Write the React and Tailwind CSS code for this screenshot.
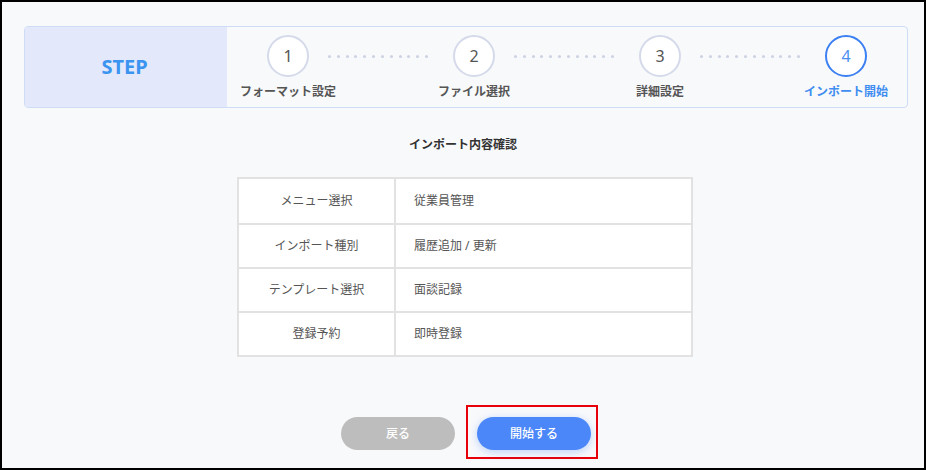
import React from "react";

const steps = [
  { no: 1, label: "フォーマット設定" },
  { no: 2, label: "ファイル選択" },
  { no: 3, label: "詳細設定" },
  { no: 4, label: "インポート開始", active: true },
];

const rows = [
  ["メニュー選択", "従業員管理"],
  ["インポート種別", "履歴追加 / 更新"],
  ["テンプレート選択", "面談記録"],
  ["登録予約", "即時登録"],
];

function Dots() {
  return (
    <div className="w-[144px] h-[42px] flex items-center pl-[19px] pr-[25px]">
      <div className="flex-1 flex justify-between">
        {Array.from({ length: 12 }).map((_, i) => (
          <span key={i} className="w-[3px] h-[3px] rounded-full bg-[#cdd3e3]" />
        ))}
      </div>
    </div>
  );
}

function Step({ no, label, active }) {
  return (
    <div className="w-[42px] flex flex-col items-center">
      <div
        className={
          "w-[42px] h-[42px] rounded-full border-2 bg-white flex items-center justify-center text-[16px] " +
          (active ? "border-[#3d80f2] text-[#4a90f0]" : "border-[#d5daea] text-[#555]")
        }
      >
        {no}
      </div>
      <div
        className={
          "mt-[7px] whitespace-nowrap text-[12px] font-bold leading-[16px] " +
          (active ? "text-[#3f8df0]" : "text-[#555]")
        }
      >
        {label}
      </div>
    </div>
  );
}

export default function App() {
  return (
    <div className="w-[926px] h-[470px] border-2 border-black bg-[#f8f9fb] font-['Noto_Sans','Noto_Sans_CJK_JP',sans-serif] overflow-hidden">
      {/* step header */}
      <div className="ml-[22px] mt-[24px] w-[884px] h-[82px] flex border border-[#cfdcf5] rounded-[4px] overflow-hidden">
        <div className="w-[202px] bg-[#e3e9fb] flex items-center justify-center pr-[3px] text-[20px] font-bold text-[#3a94f0]">
          STEP
        </div>
        <div className="flex items-start pl-[40px] pt-[8px]">
          {steps.map((s, i) => (
            <React.Fragment key={s.no}>
              {i > 0 && <Dots />}
              <Step {...s} />
            </React.Fragment>
          ))}
        </div>
      </div>

      <div className="mt-[28px] text-center text-[12px] font-bold leading-[18px] text-[#333]">
        インポート内容確認
      </div>

      {/* summary table */}
      <div className="mt-[23px] ml-[235px] w-[456px] border-2 border-[#e2e2e2] bg-white">
        {rows.map(([k, v], i) => (
          <div
            key={k}
            className={"flex h-[44px] text-[12px] text-[#555] " + (i > 0 ? "border-t-2 border-[#e2e2e2]" : "")}
          >
            <div className="w-[157px] flex items-center justify-center border-r-2 border-[#e2e2e2]">{k}</div>
            <div className="flex-1 flex items-center pl-[18px]">{v}</div>
          </div>
        ))}
      </div>

      {/* buttons */}
      <div className="mt-[48px] ml-[339px] flex items-start gap-[11px]">
        <button className="mt-[12px] w-[114px] h-[33px] rounded-full bg-[#bdbdbd] text-white text-[12px] font-medium">
          戻る
        </button>
        <div className="border-2 border-[#e8000b] pl-[9px] pr-[5px] pt-[10px] pb-[7px]">
          <button className="w-[114px] h-[33px] rounded-full bg-[#4b87f8] text-white text-[12px] font-medium shadow-[0_2px_8px_rgba(75,135,248,0.35)]">
            開始する
          </button>
        </div>
      </div>
    </div>
  );
}
